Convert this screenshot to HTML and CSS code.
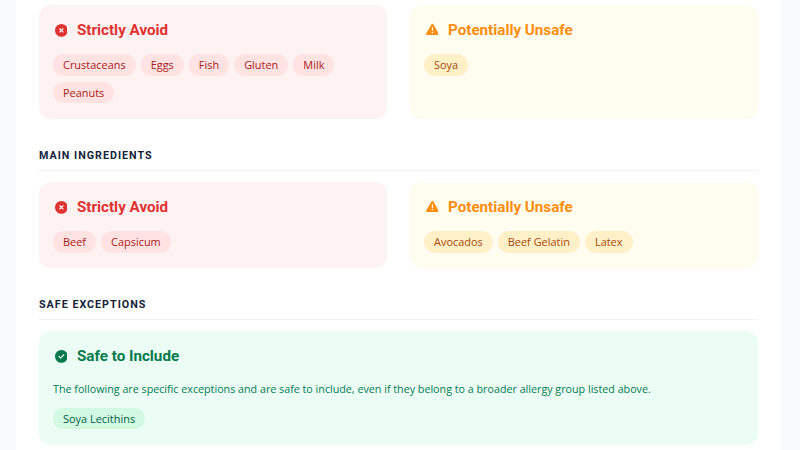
FILE: index.html
```html
<!DOCTYPE html>
<html lang="en">
<head>
<meta charset="utf-8">
<title>Allergy report</title>
<link rel="stylesheet" href="styles.css">
</head>
<body>
<main class="card">
  <div class="grid">
    <section class="panel avoid">
      <h3 class="head"><svg class="ico" viewBox="0 0 512 512"><path d="M256 512a256 256 0 1 0 0-512 256 256 0 1 0 0 512zm-81-337c9-9 25-9 34 0l47 47 47-47c9-9 25-9 34 0s9 25 0 34l-47 47 47 47c9 9 9 25 0 34s-25 9-34 0l-47-47-47 47c-9 9-25 9-34 0s-9-25 0-34l47-47-47-47c-9-9-9-25 0-34z"/></svg>Strictly Avoid</h3>
      <div class="chips"><span class="chip">Crustaceans</span><span class="chip">Eggs</span><span class="chip">Fish</span><span class="chip">Gluten</span><span class="chip">Milk</span><span class="chip">Peanuts</span></div>
    </section>
    <section class="panel warn">
      <h3 class="head"><svg class="ico" viewBox="0 0 512 512"><path d="M256 32c14 0 27 8 34 20l216 368c7 12 7 27 0 40s-20 20-34 20H40c-14 0-27-8-34-20s-7-28 0-40L222 52c7-12 20-20 34-20zm0 128c-13 0-24 11-24 24v112c0 13 11 24 24 24s24-11 24-24V184c0-13-11-24-24-24zm32 224a32 32 0 1 0-64 0 32 32 0 1 0 64 0z"/></svg>Potentially Unsafe</h3>
      <div class="chips"><span class="chip">Soya</span></div>
    </section>
  </div>
  <h2 class="title">MAIN INGREDIENTS</h2>
  <div class="grid">
    <section class="panel avoid">
      <h3 class="head"><svg class="ico" viewBox="0 0 512 512"><path d="M256 512a256 256 0 1 0 0-512 256 256 0 1 0 0 512zm-81-337c9-9 25-9 34 0l47 47 47-47c9-9 25-9 34 0s9 25 0 34l-47 47 47 47c9 9 9 25 0 34s-25 9-34 0l-47-47-47 47c-9 9-25 9-34 0s-9-25 0-34l47-47-47-47c-9-9-9-25 0-34z"/></svg>Strictly Avoid</h3>
      <div class="chips"><span class="chip">Beef</span><span class="chip">Capsicum</span></div>
    </section>
    <section class="panel warn">
      <h3 class="head"><svg class="ico" viewBox="0 0 512 512"><path d="M256 32c14 0 27 8 34 20l216 368c7 12 7 27 0 40s-20 20-34 20H40c-14 0-27-8-34-20s-7-28 0-40L222 52c7-12 20-20 34-20zm0 128c-13 0-24 11-24 24v112c0 13 11 24 24 24s24-11 24-24V184c0-13-11-24-24-24zm32 224a32 32 0 1 0-64 0 32 32 0 1 0 64 0z"/></svg>Potentially Unsafe</h3>
      <div class="chips"><span class="chip">Avocados</span><span class="chip">Beef Gelatin</span><span class="chip">Latex</span></div>
    </section>
  </div>
  <h2 class="title">SAFE EXCEPTIONS</h2>
  <section class="panel safe">
    <h3 class="head"><svg class="ico" viewBox="0 0 512 512"><path d="M256 512a256 256 0 1 0 0-512 256 256 0 1 0 0 512zm113-303L241 337c-9 9-25 9-34 0l-64-64c-9-9-9-25 0-34s25-9 34 0l47 47 111-111c9-9 25-9 34 0s9 25 0 34z"/></svg>Safe to Include</h3>
    <p class="note">The following are specific exceptions and are safe to include, even if they belong to a broader allergy group listed above.</p>
    <div class="chips"><span class="chip">Soya Lecithins</span></div>
  </section>
</main>
</body>
</html>
```
FILE: styles.css
```css
html, body { margin: 0; height: 100%; overflow: hidden; }
body { background: #f8f9fb; font-family: "Open Sans", sans-serif; padding: 0 19px 0 16px; box-sizing: border-box; }
.card { background: #fff; height: 450px; padding: 5px 23px 0; box-sizing: border-box; }
.grid { display: grid; grid-template-columns: 1fr 1fr; gap: 23px; }
.panel { border-radius: 12px; padding: 14.8px 14px 15.7px; }
.avoid { background: #fff2f2; color: #e03131; }
.warn { background: #fffcf0; color: #fd8d0e; }
.safe { background: #ebfdf4; color: #047a4c; }
.head { display: flex; align-items: center; margin: 0 0 13.5px 1.7px; font: 700 15.2px/21px Roboto, sans-serif; }
.ico { width: 12.8px; height: 12.8px; fill: currentColor; margin-right: 9.5px; flex: none; }
.warn .ico { margin-bottom: 1.5px; }
.chips { display: flex; flex-wrap: wrap; gap: 6.4px 5px; }
.chip { font: 500 10.95px/21.3px "Open Sans", sans-serif; padding: 0 10px; border-radius: 11px; }
.avoid .chip { background: #ffe3e3; color: #a82020; }
.warn .chip { background: #fff0c7; color: #a8480a; }
.safe .chip { background: #d2f9e1; color: #02604a; }
.title { margin: 30px 0 11px; padding-bottom: 8px; border-bottom: 1px solid #f1f3f5; font: 700 10.72px/13px Roboto, sans-serif; letter-spacing: 1px; color: #14233a; }
.note { margin: -0.3px 0 9.6px; font: 400 10.72px/18px "Open Sans", sans-serif; color: #067a55; }
```
